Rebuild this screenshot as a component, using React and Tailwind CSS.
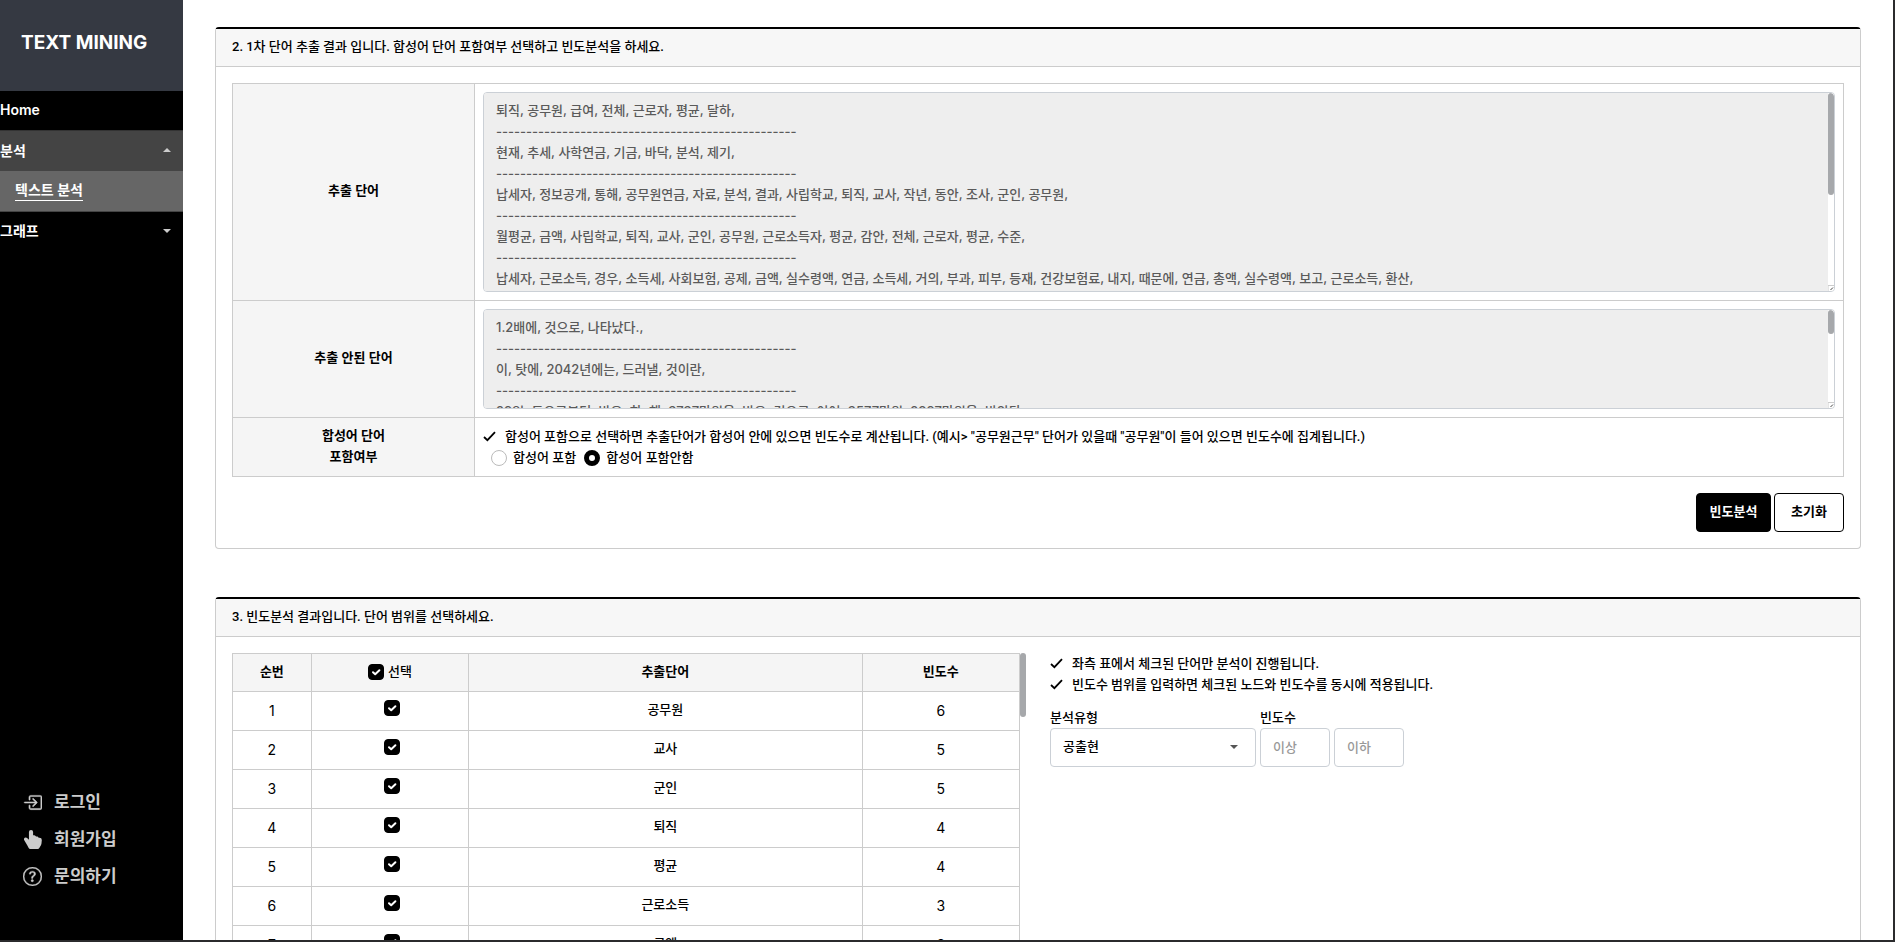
import { useState } from "react";
import { BsBoxArrowInRight, BsHandIndexThumbFill, BsQuestionCircle } from "react-icons/bs";

const DIVIDER = "-".repeat(50);

const extracted = [
  "퇴직, 공무원, 급여, 전체, 근로자, 평균, 달하,",
  "현재, 추세, 사학연금, 기금, 바닥, 분석, 제기,",
  "납세자, 정보공개, 통해, 공무원연금, 자료, 분석, 결과, 사립학교, 퇴직, 교사, 작년, 동안, 조사, 군인, 공무원,",
  "월평균, 금액, 사립학교, 퇴직, 교사, 군인, 공무원, 근로소득자, 평균, 감안, 전체, 근로자, 평균, 수준,",
  "납세자, 근로소득, 경우, 소득세, 사회보험, 공제, 금액, 실수령액, 연금, 소득세, 거의, 부과, 피부, 등재, 건강보험료, 내지, 때문에, 연금, 총액, 실수령액, 보고, 근로소득, 환산,",
  "공무원, 연금, 수령, 금액,",
  "군인, 연금, 기금, 고갈,",
  "교사, 퇴직, 평균,",
  "근로소득, 급여, 전체,",
].join("\n" + DIVIDER + "\n");

const notExtracted = [
  "1.2배에, 것으로, 나타났다.,",
  "이, 탓에, 2042년에는, 드러낼, 것이란,",
  "29일, 등으로부터, 받은, 한, 해, 3737만원을, 받은, 것으로, 이어, 3577만원, 2897만원을, 받았다,",
  "월, 이를, 모두,",
  "더, 많은, 내지,",
  "않기, 따라,",
  "있는, 보면,",
  "또, 이에,",
  "수, 있다.,",
].join("\n" + DIVIDER + "\n");

const words = [
  ["공무원", 6],
  ["교사", 5],
  ["군인", 5],
  ["퇴직", 4],
  ["평균", 4],
  ["근로소득", 3],
  ["금액", 3],
];

const Caret = ({ className }) => (
  <svg viewBox="0 0 8 4" className={className} aria-hidden="true">
    <path d="M0 0h8L4 4z" fill="currentColor" />
  </svg>
);

const Sidebar = () => (
  <aside className="flex w-[183px] shrink-0 flex-col bg-black font-semibold text-white">
    <a href="#top" className="flex h-[91px] items-center bg-[#353942] px-[21px] pb-1 text-[19px] font-bold">
      TEXT MINING
    </a>
    <nav className="text-[14px]">
      <a href="#home" className="flex h-[39px] items-center pb-0.5">Home</a>
      <button type="button" className="flex h-[41px] w-full items-center justify-between border-t border-[#333] bg-[#444] pr-3 pb-0.5">
        분석
        <Caret className="h-1 w-2 rotate-180 text-[#ccc]" />
      </button>
      <a href="#text" className="flex h-[41px] items-center border-b border-[#444] bg-[#666] pb-0.5 pl-[15px]">
        <span className="border-b border-white leading-5">텍스트 분석</span>
      </a>
      <button type="button" className="flex h-[39px] w-full items-center justify-between pr-3 pb-0.5">
        그래프
        <Caret className="h-1 w-2 text-[#ccc]" />
      </button>
    </nav>
    <ul className="mt-auto mb-[45px] pl-[23px] text-[17px] text-[#ccc]">
      <li>
        <a href="#login" className="flex h-[37px] items-center gap-3">
          <BsBoxArrowInRight className="size-[19px] stroke-[0.4]" />
          로그인
        </a>
      </li>
      <li>
        <a href="#join" className="flex h-[37px] items-center gap-3">
          <BsHandIndexThumbFill className="size-[19px]" />
          회원가입
        </a>
      </li>
      <li>
        <a href="#contact" className="flex h-[37px] items-center gap-3">
          <BsQuestionCircle className="size-[19px] stroke-[0.3]" />
          문의하기
        </a>
      </li>
    </ul>
  </aside>
);

const Card = ({ title, children }) => (
  <section className="rounded border border-t-2 border-[#ccc] border-t-black bg-white">
    <h2 className="flex h-[38px] items-center border-b border-[#ccc] bg-[#f7f7f7] px-4 pb-0.5 font-['Roboto','Noto_Sans_CJK_KR',sans-serif]">{title}</h2>
    <div className="p-4">{children}</div>
  </section>
);

const Note = ({ children }) => (
  <p className="flex items-center gap-2 font-['Roboto','Noto_Sans_CJK_KR',sans-serif] leading-[21px]">
    <svg viewBox="0 0 14 14" className="size-[14px] shrink-0" aria-hidden="true">
      <path d="M1 7l3.4 3.2L12 2.2" fill="none" stroke="currentColor" strokeWidth="1.8" />
    </svg>
    {children}
  </p>
);

const CheckBox = ({ label, ...props }) => (
  <span className="relative inline-block size-4">
    <input
      type="checkbox"
      aria-label={label}
      className="peer block size-4 appearance-none rounded border border-[#ccc] checked:border-black checked:bg-black"
      {...props}
    />
    <svg viewBox="0 0 16 16" className="pointer-events-none absolute inset-0 hidden size-4 peer-checked:block" aria-hidden="true">
      <path d="M5 8.2l2.2 2L11.4 6.2" fill="none" stroke="#fff" strokeWidth="2" strokeLinecap="round" strokeLinejoin="round" />
    </svg>
  </span>
);

const WordArea = ({ id, className, thumb, ...props }) => (
  <div className="relative">
    <textarea
      id={id}
      readOnly
      className={`block w-full resize-none rounded border border-[#cbd0d6] bg-[#eee] px-3 py-[7px] leading-[21px] text-[#5a5a5a] outline-none [scrollbar-width:none] ${className}`}
      {...props}
    />
    <div className="absolute inset-y-px right-px flex w-[6px] flex-col justify-between overflow-hidden rounded-r-sm bg-white">
      <div className={`rounded-[3px] bg-[#a6a8ab] ${thumb}`} />
      <svg viewBox="0 0 6 6" className="size-[6px]" aria-hidden="true">
        <path d="M0 6V.5h6" fill="none" stroke="#ccc" />
        <path d="M2.5 5L5 2.5" stroke="#444" />
      </svg>
    </div>
  </div>
);

const Extraction = () => {
  const [compound, setCompound] = useState("exclude");
  const options = [
    ["include", "합성어 포함"],
    ["exclude", "합성어 포함안함"],
  ];

  return (
    <Card title="2. 1차 단어 추출 결과 입니다. 합성어 단어 포함여부 선택하고 빈도분석을 하세요.">
      <table className="w-full border-collapse [&_td]:border [&_td]:border-[#ccc] [&_td]:p-2 [&_th]:w-[242px] [&_th]:border [&_th]:border-[#ccc] [&_th]:bg-[#f5f5f5] [&_th]:pb-0.5 [&_th]:font-semibold">
        <tbody>
          <tr>
            <th scope="row"><label htmlFor="extracted">추출 단어</label></th>
            <td><WordArea id="extracted" className="h-[200px]" thumb="h-[102px]" value={extracted} /></td>
          </tr>
          <tr>
            <th scope="row"><label htmlFor="not-extracted">추출 안된 단어</label></th>
            <td><WordArea id="not-extracted" className="h-[100px]" thumb="h-6" value={notExtracted} /></td>
          </tr>
          <tr>
            <th scope="row" className="leading-[21px]">합성어 단어<br />포함여부</th>
            <td>
              <Note>합성어 포함으로 선택하면 추출단어가 합성어 안에 있으면 빈도수로 계산됩니다. (예시&gt; "공무원근무" 단어가 있을때 "공무원"이 들어 있으면 빈도수에 집계됩니다.)</Note>
              <div className="flex gap-2 pl-2 leading-[21px]">
                {options.map(([value, text]) => (
                  <label key={value} className="flex items-center gap-1.5">
                    <input
                      type="radio"
                      name="compound"
                      checked={compound === value}
                      onChange={() => setCompound(value)}
                      className="size-4 appearance-none rounded-full border border-[#bbb] bg-white checked:border-[5px] checked:border-black"
                    />
                    {text}
                  </label>
                ))}
              </div>
            </td>
          </tr>
        </tbody>
      </table>
      <div className="mt-4 flex justify-end gap-[3px] font-semibold">
        <button type="button" className="h-[39px] w-[75px] rounded border border-black bg-black pb-0.5 text-white">빈도분석</button>
        <button type="button" className="h-[39px] w-[70px] rounded border border-black bg-white pb-0.5">초기화</button>
      </div>
    </Card>
  );
};

const Frequency = () => {
  const [checked, setChecked] = useState(words.map(() => true));
  const toggle = (index) => setChecked(checked.map((on, i) => (i === index ? !on : on)));

  return (
    <Card title="3. 빈도분석 결과입니다. 단어 범위를 선택하세요.">
      <div className="flex gap-6">
        <div className="relative h-[400px] w-[794px] overflow-y-auto pr-[6px] [scrollbar-width:none]">
          <table className="w-full table-fixed border-collapse text-center [&_td]:border [&_td]:border-[#ccc] [&_th]:border [&_th]:border-[#ccc] [&_th]:pb-0.5 [&_th]:font-semibold">
            <thead>
              <tr className="h-[38px] bg-[#f5f5f5]">
                <th className="w-[10%]">순번</th>
                <th className="w-[20%]">
                  <label className="flex items-center justify-center gap-1">
                    <CheckBox checked={checked.every(Boolean)} onChange={(e) => setChecked(words.map(() => e.target.checked))} />
                    <span className="font-medium">선택</span>
                  </label>
                </th>
                <th className="w-[50%]">추출단어</th>
                <th className="w-[20%]">빈도수</th>
              </tr>
            </thead>
            <tbody>
              {words.map(([word, count], index) => (
                <tr key={word} className="h-[39px]">
                  <td className="pb-0.5 text-[14px] font-normal">{index + 1}</td>
                  <td className="pb-1 pl-1 leading-none">
                    <CheckBox label={word} checked={checked[index]} onChange={() => toggle(index)} />
                  </td>
                  <td className="pb-0.5">{word}</td>
                  <td className="pb-0.5 text-[14px] font-normal">{count}</td>
                </tr>
              ))}
            </tbody>
          </table>
          <div className="absolute top-0 right-0 h-16 w-[6px] rounded-[3px] bg-[#a6a8ab]" />
        </div>
        <div className="flex-1">
          <Note>좌측 표에서 체크된 단어만 분석이 진행됩니다.</Note>
          <Note>빈도수 범위를 입력하면 체크된 노드와 빈도수를 동시에 적용됩니다.</Note>
          <div className="mt-3 flex items-end gap-1">
            <div>
              <label htmlFor="kind" className="block leading-[21px]">분석유형</label>
              <div className="relative">
                <select id="kind" className="h-[39px] w-[206px] appearance-none rounded border border-[#cbd0d6] bg-white px-3 pb-0.5">
                  <option>공출현</option>
                </select>
                <Caret className="pointer-events-none absolute top-[17px] right-[18px] h-1 w-2 text-[#555]" />
              </div>
            </div>
            <div>
              <label htmlFor="min" className="block leading-[21px]">빈도수</label>
              <input id="min" placeholder="이상" className="h-[39px] w-[70px] rounded border border-[#cbd0d6] px-3 pb-0.5 placeholder:text-[#999]" />
            </div>
            <input aria-label="빈도수 이하" placeholder="이하" className="h-[39px] w-[70px] rounded border border-[#cbd0d6] px-3 pb-0.5 placeholder:text-[#999]" />
          </div>
        </div>
      </div>
    </Card>
  );
};

const App = () => (
  <div className="flex h-screen overflow-hidden border-r-2 border-b-2 border-[#2b2b2d] bg-white font-['Inter','Noto_Sans_CJK_KR',sans-serif] text-[13px] font-medium text-black">
    <Sidebar />
    <main className="flex min-w-0 flex-1 flex-col gap-12 overflow-hidden px-8 pt-[27px]">
      <Extraction />
      <Frequency />
    </main>
  </div>
);

export default App;
